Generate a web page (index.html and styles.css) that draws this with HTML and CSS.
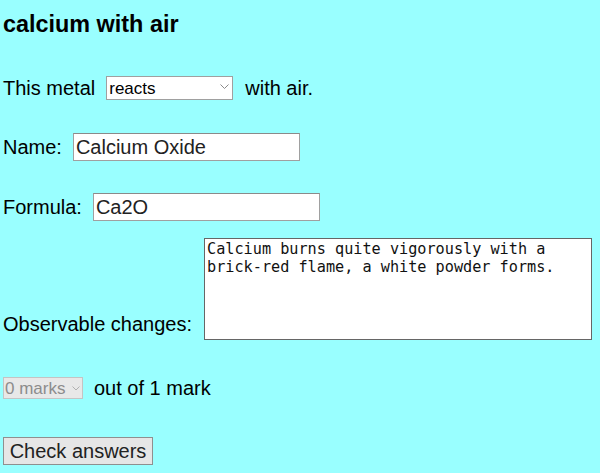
FILE: index.html
```html
<!DOCTYPE html>
<html>
<head>
<meta charset="utf-8">
<link rel="stylesheet" href="styles.css">
</head>
<body>
<div class="page">
  <h3 class="title">calcium with air</h3>
  <div class="row row-metal">
    <span class="label">This metal</span>
    <span class="sel-wrap sel-wrap-react">
      <select class="sel sel-react"><option>reacts</option><option>does not react</option></select>
      <svg class="chev chev-react" width="9" height="6" viewBox="0 0 9 6"><path d="M0.5 0.5 L4.5 4.5 L8.5 0.5" fill="none" stroke="#8a8a8a" stroke-width="1"/></svg>
    </span>
    <span class="label">with air.</span>
  </div>
  <div class="row row-name">
    <span class="label">Name:</span>
    <input class="txt txt-name" type="text" value="Calcium Oxide">
  </div>
  <div class="row row-formula">
    <span class="label">Formula:</span>
    <input class="txt txt-formula" type="text" value="Ca2O">
  </div>
  <div class="row row-obs">
    <span class="label label-obs">Observable changes:</span>
    <textarea class="area">Calcium burns quite vigorously with a brick-red flame, a white powder forms.</textarea>
  </div>
  <div class="row row-marks">
    <span class="sel-wrap sel-wrap-marks">
      <select class="sel sel-marks" disabled><option>0 marks</option></select>
      <svg class="chev chev-marks" width="8" height="5" viewBox="0 0 8 5"><path d="M0.5 0.5 L4 4 L7.5 0.5" fill="none" stroke="#b0b0b0" stroke-width="1"/></svg>
    </span>
    <span class="label">out of 1 mark</span>
  </div>
  <div class="row row-btn">
    <button class="btn" type="button">Check answers</button>
  </div>
</div>
</body>
</html>
```
FILE: styles.css
```css
html, body {
  margin: 0;
  padding: 0;
  background: #99ffff;
}
body {
  font-family: "Liberation Sans", Arial, sans-serif;
  color: #000;
}
.page {
  display: flex;
  flex-direction: column;
  align-items: flex-start;
  padding-left: 3px;
}
.title {
  margin: 10px 0 0 0;
  font-size: 23.4px;
  line-height: 28px;
  font-weight: bold;
}
.row {
  display: flex;
  align-items: center;
}
.label {
  font-size: 20px;
  line-height: 23px;
}
.row-metal { margin-top: 38px; height: 24px; }
.sel-wrap {
  position: relative;
  display: inline-flex;
}
.chev {
  position: absolute;
  pointer-events: none;
}
.chev-react { right: 4px; top: 8px; }
.chev-marks { right: 3px; top: 9px; }
.sel {
  -webkit-appearance: none;
  appearance: none;
  font-family: "Liberation Sans", Arial, sans-serif;
  box-sizing: border-box;
  background: #fff;
  border: 1px solid #a0a0a0;
  border-radius: 0;
  padding: 0 0 0 2px;
  margin: 0;
  color: #000;
  opacity: 1;
}
.sel-wrap-react {
  margin-left: 11px;
  margin-right: 12px;
}
.sel-react {
  width: 127px;
  height: 24px;
  font-size: 17px;
}
.row-name { margin-top: 33px; height: 28px; }
.txt {
  box-sizing: border-box;
  height: 28px;
  width: 227px;
  font-family: "Liberation Sans", Arial, sans-serif;
  font-size: 20px;
  padding: 0 2px;
  border: 1px solid #a0a0a0;
  border-top-color: #8a8a8a;
  background: #fff;
  color: #222;
  margin: 0;
}
.txt-name { margin-left: 11px; }
.txt-formula { margin-left: 11px; }
.row-formula { margin-top: 32px; height: 28px; }
.row-obs { margin-top: 17px; align-items: flex-end; }
.label-obs { padding-bottom: 4px; }
.area {
  box-sizing: border-box;
  width: 388px;
  height: 102px;
  margin: 0 0 0 12px;
  padding: 1px 2px;
  border: 1px solid #666;
  background: #fff;
  font-family: "DejaVu Sans Mono", "Liberation Mono", monospace;
  font-size: 15.2px;
  line-height: 18px;
  color: #111;
  resize: none;
  overflow: hidden;
}
.row-marks { margin-top: 37px; height: 22px; }
.sel-wrap-marks { margin-right: 11px; }
.sel-marks {
  width: 80px;
  height: 22px;
  font-size: 17px;
  padding-left: 1px;
  background: #e8e8e8;
  border-color: #c4c4c4;
  color: #8c8c8c;
}
.row-btn { margin-top: 38px; }
.btn {
  box-sizing: border-box;
  height: 28px;
  width: 150px;
  font-family: "Liberation Sans", Arial, sans-serif;
  font-size: 20px;
  padding: 0;
  color: #222;
  background: #e6e6e6;
  border: 1px solid #8f8f8f;
  border-radius: 0;
}
```
